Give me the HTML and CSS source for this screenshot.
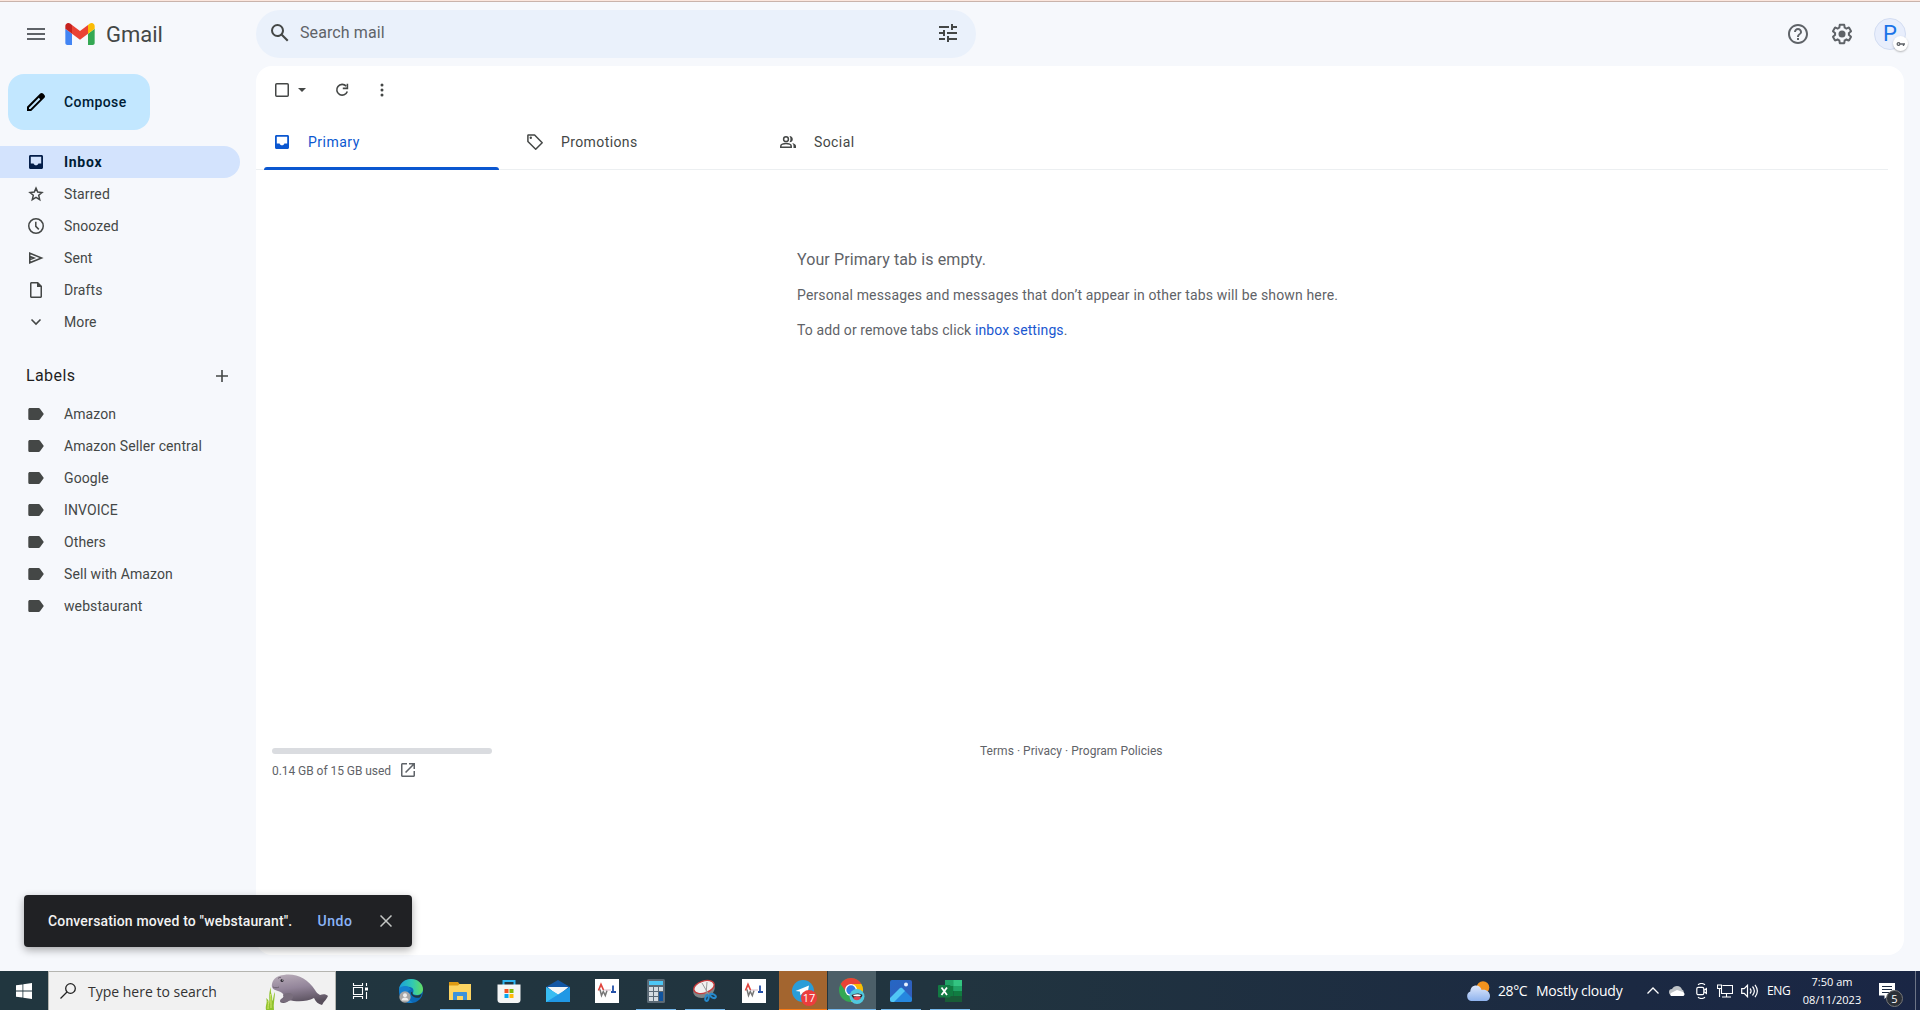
FILE: index.html
```html
<!DOCTYPE html>
<html lang="en">
<head>
<meta charset="utf-8">
<title>Inbox - Gmail</title>
<link rel="stylesheet" href="styles.css">
</head>
<body>
<svg class="defs" aria-hidden="true">
  <defs>
    <symbol id="label" viewBox="0 0 20 20"><path d="M4 4h8.600c.6 0 1.100.3 1.400.8L17.800 10 14 15.200c-.3.5-.8.8-1.400.8H4c-1 0-1.700-.7-1.700-1.600V5.600C2.300 4.700 3 4 4 4z"/></symbol>
    <symbol id="inbox" viewBox="0 0 20 20"><path fill-rule="evenodd" d="M4.500 3h11c.9 0 1.500.7 1.500 1.500v11c0 .9-.6 1.500-1.500 1.500h-11c-.9 0-1.500-.6-1.500-1.500v-11C3 3.700 3.600 3 4.500 3zM4.800 4.700v6.800h2.800c.3 1.100 1.200 1.800 2.400 1.800s2.100-.7 2.400-1.800h2.800V4.700z"/></symbol>
    <symbol id="wl" viewBox="0 0 24 24"><path fill="#fff" d="M0 0h24v24H0z"/><path fill="none" stroke="#e0443c" stroke-width="1.700" d="M3.500 11.500 6 5.500l2.500 5.500"/><path fill="none" stroke="#777" stroke-width="1.500" d="m5 10.500 1.500 6 1.800-4 2 4 1.700-5"/><path stroke="#d8b8c4" d="M9 11h7"/><path fill="none" stroke="#2450a8" stroke-width="1.800" d="M18 6.500v6.500M16 13h5"/></symbol>
  </defs>
</svg>
<div class="frame"></div>
<div class="app">
  <header class="header">
    <div class="brand">
      <svg class="menu" width="18" height="12" viewBox="0 0 18 12"><path d="M0 0h18v2H0zM0 5h18v2H0zM0 10h18v2H0z"/></svg>
      <svg class="logo" width="30" height="22" viewBox="52 42 88 66"><path fill="#4285f4" d="M58 108h14V74L52 59v43c0 3.320 2.690 6 6 6"/><path fill="#34a853" d="M120 108h14c3.320 0 6-2.690 6-6V59l-20 15"/><path fill="#fbbc04" d="M120 48v26l20-15v-8c0-7.420-8.470-11.650-14.400-7.200"/><path fill="#ea4335" d="M72 74V48l24 18 24-18v26L96 92"/><path fill="#c5221f" d="M52 51v8l20 15V48l-5.600-4.200c-5.940-4.450-14.400-.22-14.400 7.200"/></svg>
      <span class="t brand-name">Gmail</span>
    </div>
    <div class="search">
      <svg width="24" height="24" viewBox="0 0 24 24"><path d="M20.490 19l-5.730-5.730C15.530 12.200 16 10.910 16 9.500A6.500 6.500 0 1 0 9.500 16c1.410 0 2.700-.47 3.770-1.240L19 20.490 20.490 19zM5 9.500C5 7.010 7.010 5 9.500 5S14 7.010 14 9.500 11.990 14 9.500 14 5 11.990 5 9.500z"/></svg>
      <span class="t search-hint">Search mail</span>
      <svg width="24" height="24" viewBox="0 0 24 24"><path d="M3 17v2h6v-2H3zM3 5v2h10V5H3zm10 16v-2h8v-2h-8v-2h-2v6h2zM7 9v2H3v2h4v2h2V9H7zm14 4v-2H11v2h10zm-6-4h2V7h4V5h-4V3h-2v6z"/></svg>
    </div>
    <div class="account">
      <svg width="24" height="24" viewBox="0 0 24 24"><path d="M11 18h2v-2h-2v2zm1-16C6.480 2 2 6.480 2 12s4.480 10 10 10 10-4.480 10-10S17.520 2 12 2zm0 18c-4.410 0-8-3.590-8-8s3.590-8 8-8 8 3.590 8 8-3.590 8-8 8zm0-14c-2.210 0-4 1.790-4 4h2c0-1.100.9-2 2-2s2 .9 2 2c0 2-3 1.750-3 5h2c0-2.250 3-2.500 3-5 0-2.210-1.790-4-4-4z"/></svg>
      <svg width="24" height="24" viewBox="0 0 24 24"><path d="M13.850 22.250h-3.700c-.74 0-1.360-.54-1.450-1.270l-.27-1.890c-.27-.14-.53-.29-.79-.46l-1.800.72c-.7.26-1.470-.03-1.810-.65L2.200 15.530c-.35-.66-.2-1.440.36-1.880l1.530-1.190c-.01-.15-.02-.3-.02-.46 0-.15.010-.31.020-.46l-1.520-1.190c-.59-.45-.74-1.260-.37-1.880l1.850-3.190c.34-.62 1.110-.9 1.790-.63l1.810.73c.26-.17.52-.32.780-.46l.27-1.910c.09-.7.710-1.250 1.440-1.250h3.700c.74 0 1.360.54 1.450 1.270l.27 1.890c.27.14.53.29.79.46l1.800-.72c.71-.26 1.480.03 1.820.65l1.840 3.180c.36.66.2 1.440-.36 1.880l-1.520 1.190c.01.15.02.3.02.46s-.01.31-.02.46l1.520 1.190c.56.45.72 1.230.37 1.860l-1.860 3.220c-.34.62-1.110.9-1.800.63l-1.800-.72c-.26.17-.52.32-.78.46l-.27 1.910c-.1.680-.72 1.220-1.460 1.220zm-3.230-2h2.760l.37-2.550.53-.22c.44-.18.88-.44 1.340-.78l.45-.34 2.380.96 1.380-2.400-2.030-1.580.07-.56c.03-.26.06-.51.060-.78s-.03-.53-.06-.78l-.07-.56 2.030-1.580-1.390-2.400-2.390.96-.45-.35c-.42-.32-.87-.58-1.330-.77l-.52-.22-.37-2.550h-2.760l-.37 2.550-.53.210c-.44.190-.88.440-1.340.790l-.45.330-2.380-.95-1.390 2.390 2.030 1.580-.07.560a7 7 0 0 0-.06.790c0 .26.020.53.060.780l.07.560-2.030 1.580 1.380 2.400 2.390-.96.450.35c.43.330.86.580 1.330.770l.53.220.38 2.550z"/><circle cx="12" cy="12" r="3.500"/></svg>
      <div class="avatar"><span class="t">P</span>
        <span class="avatar-badge"><svg width="9" height="6" viewBox="0 0 9 6"><path fill-rule="evenodd" d="M2.500 1a2 2 0 0 1 1.900 1.300H9v1.400h-.8V5H6.800V3.700H4.400A2 2 0 1 1 2.500 1zm0 1.300a.7.7 0 1 0 0 1.400.7.7 0 0 0 0-1.400z"/></svg></span>
      </div>
    </div>
  </header>
  <div class="body">
    <aside class="sidebar">
      <button class="compose">
        <svg width="24" height="24" viewBox="0 0 24 24"><path d="M20.410 4.940l-1.350-1.350c-.78-.78-2.050-.78-2.830 0L3 16.820V21h4.180l13.230-13.230c.79-.78.79-2.050 0-2.830zM6.410 19.060L5 19v-1.360l9.820-9.820 1.410 1.410-9.820 9.830z"/></svg>
        <span class="t">Compose</span>
      </button>
      <nav class="nav">
        <div class="item active"><svg width="20" height="20"><use href="#inbox"/></svg><span class="t">Inbox</span></div>
        <div class="item"><svg width="20" height="20" viewBox="0 0 20 20"><path fill="none" stroke="#444746" stroke-width="1.500" d="m10 4.100 1.700 4 4.300.4-3.300 2.800 1 4.300L10 13.300l-3.700 2.300 1-4.300L4 8.500l4.300-.4z"/></svg><span class="t">Starred</span></div>
        <div class="item"><svg width="20" height="20" viewBox="0 0 20 20"><g fill="none" stroke="#444746" stroke-width="1.500"><circle cx="10" cy="10" r="7.250"/><path d="M9.800 5.800v4.600l3 3"/></g></svg><span class="t">Snoozed</span></div>
        <div class="item"><svg width="20" height="20" viewBox="0 0 20 20"><path fill="none" stroke="#444746" stroke-width="1.500" d="M3.750 5.200v9.600L15.600 10zM4 8.500l4 1.500-4 1.500"/></svg><span class="t">Sent</span></div>
        <div class="item"><svg width="20" height="20" viewBox="0 0 20 20"><path fill-rule="evenodd" d="M5.500 2H12l4 4v10.500c0 .8-.7 1.500-1.500 1.500h-9c-.8 0-1.500-.7-1.500-1.500v-13C4 2.700 4.700 2 5.500 2zm0 1.500v13h9V7H11V3.500z"/></svg><span class="t">Drafts</span></div>
        <div class="item"><svg width="20" height="20" viewBox="0 0 20 20"><path fill="none" stroke="#444746" stroke-width="1.600" d="m5.500 7.500 4.500 4.500 4.500-4.500"/></svg><span class="t">More</span></div>
      </nav>
      <div class="labels-head"><span class="t">Labels</span><svg width="12" height="12" viewBox="0 0 12 12"><path d="M5.200 0h1.600v5.200H12v1.600H6.800V12H5.200V6.800H0V5.200h5.200z"/></svg></div>
      <nav class="nav">
        <div class="item"><svg width="20" height="20"><use href="#label"/></svg><span class="t">Amazon</span></div>
        <div class="item"><svg width="20" height="20"><use href="#label"/></svg><span class="t">Amazon Seller central</span></div>
        <div class="item"><svg width="20" height="20"><use href="#label"/></svg><span class="t">Google</span></div>
        <div class="item"><svg width="20" height="20"><use href="#label"/></svg><span class="t">INVOICE</span></div>
        <div class="item"><svg width="20" height="20"><use href="#label"/></svg><span class="t">Others</span></div>
        <div class="item"><svg width="20" height="20"><use href="#label"/></svg><span class="t">Sell with Amazon</span></div>
        <div class="item"><svg width="20" height="20"><use href="#label"/></svg><span class="t">webstaurant</span></div>
      </nav>
    </aside>
    <main class="panel">
      <div class="toolbar">
        <svg class="check" width="14" height="14" viewBox="0 0 14 14"><rect x=".75" y=".75" width="12.500" height="12.500" rx="1" fill="none" stroke="#444746" stroke-width="1.500"/></svg>
        <svg class="caret" width="8" height="4" viewBox="0 0 8 4"><path d="M0 0h8L4 4z"/></svg>
        <svg class="refresh" width="20" height="20" viewBox="0 0 20 20"><path fill="none" stroke="#444746" stroke-width="1.600" d="M14.200 6.100A5.400 5.400 0 1 0 15.300 11.500"/><path d="M16.200 3.800v5.400h-5.400V7.600h3.800V3.800z"/></svg>
        <svg class="kebab" width="4" height="14" viewBox="0 0 4 14"><circle cx="2" cy="2" r="1.500"/><circle cx="2" cy="7" r="1.500"/><circle cx="2" cy="12" r="1.500"/></svg>
      </div>
      <div class="tabs">
        <div class="tab selected"><svg width="20" height="20"><use href="#inbox"/></svg><span class="t">Primary</span></div>
        <div class="tab"><svg width="20" height="20" viewBox="0 0 20 20"><path fill="none" stroke="#444746" stroke-width="1.500" stroke-linejoin="round" d="M2.900 3.400v6.100l7.800 7.800 6.500-6.500L9.600 2.900H3.400z"/><circle cx="5.800" cy="5.800" r="1.200"/></svg><span class="t">Promotions</span></div>
        <div class="tab"><svg width="20" height="20" viewBox="0 0 20 20"><g fill="none" stroke="#444746" stroke-width="1.500"><circle cx="8" cy="7.200" r="2.400"/><path d="M2.800 15.200v-1.300c0-1.400 2.700-2.400 5.200-2.400s5.200 1 5.200 2.400v1.300z"/></g><path d="M11.500 4.100c2 0 3.300 1.400 3.300 3.100s-1.300 3.100-3.300 3.100c1.300-1.800 1.300-4.400 0-6.200zM14.200 11c2.200.5 3.800 1.500 3.800 3v2h-2.500v-2c0-1.200-.4-2.200-1.300-3z"/></svg><span class="t">Social</span></div>
      </div>
      <div class="empty">
        <p class="empty-title">Your Primary tab is empty.</p>
        <p class="empty-text">Personal messages and messages that don’t appear in other tabs will be shown here.</p>
        <p class="empty-hint">To add or remove tabs click <a class="link">inbox settings</a>.</p>
      </div>
      <footer class="foot">
        <div class="storage">
          <div class="bar"></div>
          <div class="used"><span class="t">0.14 GB of 15 GB used</span><svg width="14" height="14" viewBox="0 0 14 14"><path d="M0 1.500C0 .7.700 0 1.500 0H6v1.500H1.500v11h11V8H14v4.500c0 .8-.7 1.500-1.500 1.500h-11C.7 14 0 13.300 0 12.500zM8 0h6v6h-1.500V2.600L5.100 10 4 8.900l7.400-7.400H8z"/></svg></div>
        </div>
        <div class="terms">Terms · Privacy · Program Policies</div>
      </footer>
    </main>
  </div>
  <div class="toast">
    <span class="t toast-text">Conversation moved to "webstaurant".</span>
    <span class="t undo">Undo</span>
    <svg width="12" height="12" viewBox="0 0 12 12"><path stroke="#c4c7c5" stroke-width="1.500" d="m.5.500 11 11M11.500.500l-11 11"/></svg>
  </div>
</div>
<div class="taskbar">
  <div class="start"><svg width="16" height="16" viewBox="0 0 16 16"><path fill="#fff" d="M0 2.300 6.500 1.400v6.100H0zM7.300 1.300 16 0v7.500H7.300zM0 8.400h6.500v6.200L0 13.700zM7.300 8.400H16V16l-8.700-1.300z"/></svg></div>
  <div class="tb-search">
    <svg width="16" height="16" viewBox="0 0 16 16"><g fill="none" stroke="#222" stroke-width="1.300"><circle cx="10.500" cy="5.500" r="4.800"/><path d="M7 9 .5 15.500"/></g></svg>
    <span class="t">Type here to search</span>
    <svg class="manatee" width="64" height="38" viewBox="0 0 64 38">
      <defs><linearGradient id="skin" x1="0" y1="0" x2=".25" y2="1"><stop offset="0" stop-color="#b9adb9"/><stop offset=".5" stop-color="#93859a"/><stop offset="1" stop-color="#584f5c"/></linearGradient></defs>
      <path fill="#8fc22d" d="M1 38c-1-5 2-7 0-12 3 2 3 4 3 6 1-5-1-10 2-17-1 7 2 8 1 14 2-2 1-6 3-9 0 6-2 12-1 18z"/><path stroke="#d5e86b" fill="none" d="M3 37c0-4 1-6 0-8M6 36c0-5 0-10-.5-14"/>
      <path fill="url(#skin)" d="M7 12C8 6 13 3.500 19 3 31 1 43 7 50 18c1 2 3 4 5 5 3-1 6-1 8 1-1 3-4 5-6 9-4-1-6-3-8-7-7 4-18 4-25 2-2 3-6 4-9 2 1-3 3-4 4-6-1-3-3-4-6-5-4-1-7-3-6-7z"/>
      <path fill="#786d7c" d="M18 23c2-2 5-2 7-2 4 1 4 5 1 7-3 2-8 3-11 1 0-2 2-3 4-3z"/><circle cx="17" cy="8.500" r="1.500" fill="#2b2730"/><circle cx="17.400" cy="8.100" r=".5" fill="#fff"/><path stroke="#6b606e" fill="none" d="M13 6.500c1-1 2-1.200 3-1M8 15c2 1 4 1 6 0"/>
    </svg>
  </div>
  <div class="slot view"><svg width="17" height="16" viewBox="0 0 17 16"><g fill="none" stroke="#fff" stroke-width="1.100"><path d="M1.500 0v2.500h9V0M1.500 16v-2.500h9V16"/><path d="M1.500 4.500h9v7h-9zM14.500 0v3M14.500 9v7"/></g><path fill="#fff" d="M13 4.500h3v3h-3z"/></svg></div>
  <div class="apps">
    <div class="slot"><svg width="24" height="24" viewBox="0 0 24 24"><defs><linearGradient id="edge" x2="1"><stop stop-color="#1a9fd9"/><stop offset=".55" stop-color="#31c8b4"/><stop offset="1" stop-color="#62dd61"/></linearGradient></defs><circle cx="12" cy="12" r="12" fill="#0c69b7"/><path fill="url(#edge)" d="M0 10C1 4 6 0 12 0c7 0 12 5 12 10 0 4-3 6-6.500 6-2 0-4-.7-3.500-2 1-2 1-5-3-6C7 6.700 2 7.500 0 10z"/><path fill="#21363f" d="M13.500 12.500c-1 3 2 4.500 5 4 2-.3 3.500-1 4.300-1.700-.5 1.500-1.200 3-2 3.800-4 1-9-1-9-5z"/><path fill="#1580cf" d="M0 10c2-4 11-4 12 1-4 0-5 5-2 9 1 2 4 3.500 4 3.500C5 26 0 19 0 10z"/><circle cx="6" cy="18" r="5.700" fill="#a8a8a8"/><circle cx="6" cy="16.200" r="2" fill="#eee"/><path fill="#eee" d="M2.500 21.500c0-4 7-4 7 0z"/></svg></div>
    <div class="slot running"><svg width="22" height="18" viewBox="0 0 22 18"><path fill="#dd9a13" d="M0 0h9l1.500 2H22v5H0z"/><path fill="#fcd462" d="M0 3.500h9l1.500-1.500H22v16H0z"/><path fill="#3b91da" d="M4 18v-7c0-.6.4-1 1-1h12c.6 0 1 .4 1 1v7h-4v-4H8v4z"/></svg></div>
    <div class="slot"><svg width="24" height="24" viewBox="0 0 24 24"><path fill="none" stroke="#2db3ef" stroke-width="2" d="M6.500 7V2h11v5"/><path fill="#f4f5f5" d="M.5 5.500h23V21c0 1.700-1.300 3-3 3h-17c-1.700 0-3-1.300-3-3z"/><path fill="#f35325" d="M7.500 10h4v4h-4z"/><path fill="#81bc06" d="M12.500 10h4v4h-4z"/><path fill="#05a6f0" d="M7.500 15h4v4h-4z"/><path fill="#ffba08" d="M12.500 15h4v4h-4z"/></svg></div>
    <div class="slot"><svg width="24" height="22" viewBox="0 0 24 22"><path fill="#1256a4" d="M0 7 12 0l12 7v4H0z"/><path fill="#f3f6f8" d="M1.500 7h21L12 16z"/><path fill="#31b5ee" d="M0 7l24 15H0z"/><path fill="#2098e5" d="M24 7 0 22h24z"/><path fill="#38bdf2" d="m0 7 12 7.500L0 22z"/></svg></div>
    <div class="slot"><svg width="24" height="24"><use href="#wl"/></svg></div>
    <div class="slot running"><svg width="18" height="24" viewBox="0 0 18 24"><rect width="18" height="24" rx="1.500" fill="#5b6a76"/><path fill="#4dc6f4" d="M2 2h14v4H2z"/><path fill="#d5dce1" d="M2 8h4v4H2zM7 8h4v4H7zM12 8h4v4h-4zM2 13h4v4H2zM7 13h4v4H7zM2 18h4v4H2zM7 18h4v4H7z"/><path fill="#11549e" d="M12 13h4v9h-4z"/></svg></div>
    <div class="slot running"><svg width="24" height="24" viewBox="0 0 24 24"><ellipse cx="11" cy="11" rx="11" ry="7.500" transform="rotate(-18 11 11)" fill="#7e8588"/><ellipse cx="11" cy="8" rx="10.500" ry="6" transform="rotate(-18 11 8)" fill="#f1f1f1" stroke="#c83c3e" stroke-width="1.400"/><path stroke="#999" stroke-width="1" d="m9 4 7 12M14 3l-1 12"/><g fill="none" stroke="#2689cc" stroke-width="2"><ellipse cx="14" cy="19" rx="1.600" ry="3" transform="rotate(15 14 19)"/><ellipse cx="20" cy="17" rx="3" ry="1.700" transform="rotate(25 20 17)"/></g></svg></div>
    <div class="slot"><svg width="24" height="24"><use href="#wl"/></svg></div>
    <div class="slot alert"><svg width="24" height="24" viewBox="0 0 24 24"><circle cx="12" cy="12" r="11" fill="#2a9dd8"/><path fill="#fff" d="M4.500 12 18 6.500 16 17l-4.500-3L9.500 16.500l-.7-4z"/></svg><span class="count">17</span></div>
    <div class="slot current"><svg width="26" height="26" viewBox="0 0 26 26"><circle cx="12" cy="12" r="12" fill="#34a853"/><path fill="#ea4335" d="M1.600 6A12 12 0 0 1 22.400 6L12 9 8 15z"/><path fill="#fbbc04" d="M22.400 6A12 12 0 0 1 12 24l5-9-3-9z"/><circle cx="12" cy="12" r="6" fill="#fff"/><circle cx="12" cy="12" r="4.700" fill="#3579e5"/><circle cx="18" cy="18.500" r="7.500" fill="#50c8de"/><path fill="#302530" d="M12.500 17c4-2 8-2 11 0-1 5-9 7-11 0z"/><path fill="#e84250" d="M14 20c3-2 6-2 8-.5-1 3-6 4-8 .5z"/><path fill="#fff" d="M14 17c3-1 6-1 8 0l-1 1.200h-6z"/></svg></div>
    <div class="slot running"><svg width="22" height="22" viewBox="0 0 22 22"><defs><linearGradient id="photo" x2="1" y2="1"><stop stop-color="#2567c4"/><stop offset="1" stop-color="#345cba"/></linearGradient><clipPath id="round"><rect width="22" height="22" rx="2"/></clipPath></defs><g clip-path="url(#round)"><path fill="url(#photo)" d="M0 0h22v22H0z"/><path fill="#2587df" d="m11 7 11 11v4H4z"/><path fill="#50c6f5" d="M0 18 9.500 8.500c1-1 2-1 3 0L15 11 4 22H0z"/></g><circle cx="16" cy="4.500" r="2" fill="#e8f1ff"/></svg></div>
    <div class="slot running"><svg width="24" height="22" viewBox="0 0 24 22"><path fill="#21a366" d="M7 0h9v11H7z"/><path fill="#33c481" d="M15.500 0H24v6h-8.500z"/><path fill="#107c41" d="M7 6h8.500v10H7z"/><path fill="#21a366" d="M15.500 6H24v5h-8.500z"/><path fill="#107c41" d="M15.500 11H24v5h-8.500z"/><path fill="#185c37" d="M7 16h17v6H7z"/><rect y="5" width="12.500" height="12.500" rx="1" fill="#127a43"/><path fill="none" stroke="#fff" stroke-width="1.800" d="m3.500 7.500 5.500 7.500M9 7.500 3.500 15"/></svg></div>
  </div>
  <div class="tray">
    <svg class="weather" width="24" height="20" viewBox="0 0 24 20"><defs><linearGradient id="cloud" x2="0" y2="1"><stop stop-color="#dfe8fb"/><stop offset="1" stop-color="#8fb3ee"/></linearGradient></defs><circle cx="17" cy="6.500" r="6.300" fill="#f2931e"/><path fill="url(#cloud)" d="M5 20a5 5 0 0 1-.7-9.500C4.500 6.500 7 4.500 10 4.500c3 0 5 2 5.600 4.500 4-1 8.400 1.500 8.400 6 0 3-2 5-4.500 5z"/></svg>
    <span class="t temp">28°C</span><span class="t sky">Mostly cloudy</span>
    <svg class="up" width="12" height="7" viewBox="0 0 12 7"><path fill="none" stroke="#fff" stroke-width="1.300" d="m.5 6.500 5.500-5.500 5.500 5.500"/></svg>
    <svg class="onedrive" width="16" height="10" viewBox="0 0 16 10"><path fill="#bfc3c7" d="M3 9a3 3 0 0 1 0-6c1-2 3-3 5-3 3 0 4 1.500 5 3.500A3 3 0 0 1 13 9z"/><path fill="#fff" d="M2 10c-1-1-1-2 0-3l6-3 6 2c2 1 2 3 .5 4z"/></svg>
    <svg class="meet" width="11" height="16" viewBox="0 0 11 16"><g fill="none" stroke="#fff" stroke-width="1.200"><rect x=".8" y="4.300" width="7" height="7.400" rx="1.500"/><path d="m8 7.200 2.400-1.500v4.600L8 8.800M2 1.800C4 .3 7 .3 9 1.800M2 14.200c2 1.500 5 1.500 7 0"/></g></svg>
    <svg class="net" width="16" height="14" viewBox="0 0 16 14"><path fill="none" stroke="#fff" stroke-width="1.100" d="M5.500 1.500h10v8h-11V5M.5 1h4v3.500h-4zM2.500 4.500V13M9.500 9.500v3M5 13h9"/></svg>
    <svg class="vol" width="17" height="14" viewBox="0 0 17 14"><path fill="none" stroke="#fff" stroke-width="1.200" d="M.7 4.700h2.500L6.500 1.300v11.400L3.200 9.300H.7zM9 4.500c1.300 1.500 1.300 3.500 0 5M11.500 2.500c2.500 3 2.500 6 0 9M14 .8c3 4 3 8.500 0 12.400"/></svg>
    <span class="t lang">ENG</span>
    <div class="clock"><span class="t">7:50 am</span><span class="t">08/11/2023</span></div>
    <div class="notice"><svg width="16" height="16" viewBox="0 0 16 16"><path fill="#fff" d="M0 0h16v12.500H9L5.500 16v-3.500H0z"/><path stroke="#1b2a42" d="M3 3.500h10M3 6.500h10M3 9.500h7"/></svg><span class="notice-badge">5</span></div>
    <span class="peek"></span>
  </div>
</div>
</body>
</html>
```
FILE: styles.css
```css
* { box-sizing: border-box; }
body {
  margin: 0;
  width: 1920px;
  height: 1010px;
  overflow: hidden;
  display: flex;
  flex-direction: column;
  background: #f6f8fc;
  color: #444746;
  fill: #444746;
  font: 14px/20px Roboto, "Liberation Sans", sans-serif;
}
svg { display: block; flex: none; }
p { margin: 0; }
.t { white-space: nowrap; }
.defs { position: absolute; width: 0; height: 0; }
.frame { height: 2px; flex: none; background: #fbe6dd; border-bottom: 1px solid #c9b3ab; }
.app { flex: 1; min-height: 0; display: flex; flex-direction: column; position: relative; }

.header { height: 64px; flex: none; display: flex; align-items: flex-start; padding-top: 8px; }
.brand { width: 256px; height: 48px; display: flex; align-items: center; padding-left: 27px; }
.menu { fill: #5f6368; }
.logo { margin: 0 11px 0 20px; }
.brand-name { padding-top: 2px; font-size: 22px; line-height: 26px; color: #444746; }
.search { width: 720px; height: 48px; border-radius: 24px; background: #eaf1fb; display: flex; align-items: center; padding: 0 16px 2px 12px; }
.search-hint { flex: 1; margin-left: 8px; font-size: 16px; letter-spacing: .1px; color: #5f6368; }
.account { margin-left: auto; height: 48px; display: flex; align-items: center; padding-right: 14px; fill: #5f6368; gap: 20px; }
.avatar { position: relative; width: 32px; height: 32px; border-radius: 50%; background: #e8eefc; border: 1px solid #d3ddf2; color: #1a73e8; font-size: 22px; display: flex; align-items: center; justify-content: center; }
.avatar-badge { position: absolute; left: 18px; top: 17px; width: 15px; height: 15px; border-radius: 50%; background: #fff; box-shadow: 0 1px 2px #0004; display: flex; align-items: center; justify-content: center; }

.body { flex: 1; min-height: 0; display: flex; padding: 0 16px 16px 0; }
.sidebar { width: 256px; padding-top: 8px; }
.compose { width: 142px; height: 56px; margin-left: 8px; padding: 0 0 0 16px; border: 0; border-radius: 16px; background: #c2e7ff; display: flex; align-items: center; gap: 16px; font: 500 14px/20px Roboto, sans-serif; letter-spacing: .4px; color: #001d35; fill: #000; }
.nav { display: flex; flex-direction: column; }
.compose + .nav { margin-top: 16px; }
.item { width: 240px; height: 32px; padding-left: 26px; display: flex; align-items: center; gap: 18px; letter-spacing: .1px; }
.item.active { background: #d3e3fd; border-radius: 0 16px 16px 0; color: #001d35; fill: #041e49; font-weight: 700; letter-spacing: .7px; }
.labels-head { height: 60px; padding: 16px 28px 0 26px; display: flex; align-items: center; justify-content: space-between; font-size: 16px; letter-spacing: .4px; color: #1f1f1f; }

.panel { flex: 1; border-radius: 16px; background: #fff; display: flex; flex-direction: column; }
.toolbar { height: 48px; display: flex; align-items: center; padding-left: 19px; }
.caret { margin-left: 9px; }
.refresh { margin-left: 26px; }
.kebab { margin-left: 28px; }
.tabs { height: 56px; margin-right: 16px; display: flex; border-bottom: 1px solid #eceff1; }
.tab { position: relative; width: 253px; display: flex; align-items: center; gap: 16px; padding-left: 16px; letter-spacing: .4px; }
.tab.selected { color: #0b57d0; fill: #0b57d0; letter-spacing: .5px; }
.tab.selected::after { content: ""; position: absolute; left: 8px; bottom: -1px; width: 235px; height: 3px; background: #0b57d0; border-radius: 3px 3px 0 0; }
.empty { margin: 78px 0 0 541px; color: #5f6368; white-space: nowrap; }
.empty-title { font-size: 16px; line-height: 24px; letter-spacing: .1px; }
.empty-text { margin-top: 13px; letter-spacing: .15px; }
.empty-hint { margin-top: 15px; letter-spacing: .11px; }
.link { color: #1a57d0; }
.foot { margin-top: 408px; display: flex; color: #5f6368; font-size: 12px; fill: #5f6368; }
.storage { width: 724px; padding-left: 16px; }
.bar { width: 220px; height: 6px; border-radius: 3px; background: #dadce0; }
.used { margin-top: 7px; display: flex; align-items: center; gap: 10px; letter-spacing: -.05px; }
.used svg { margin-top: -2px; }
.terms { margin-top: -7px; letter-spacing: .03px; }

.toast { position: absolute; left: 24px; top: 893px; width: 388px; height: 52px; border-radius: 4px; background: #202124; color: #f2f2f2; display: flex; align-items: center; padding: 0 20px 0 24px; box-shadow: 0 3px 8px #0005; font-weight: 500; letter-spacing: .16px; }
.undo { margin-left: 25px; color: #8ab4f8; letter-spacing: .6px; }
.toast svg { margin-left: auto; }

.taskbar { height: 39px; flex: none; display: flex; background: linear-gradient(90deg, #21363f, #21343f 50%, #1b2942 85%, #1a2645); color: #fff; font-family: "Open Sans", "Noto Sans", sans-serif; }
.start { width: 48px; display: flex; align-items: center; justify-content: center; }
.tb-search { width: 288px; background: #f1f1f1; border: 1px solid #b5b5b0; border-bottom: 0; display: flex; align-items: center; padding-left: 11px; color: #333; }
.tb-search .t { margin-left: 12px; padding-top: 1px; }
.manatee { margin-left: auto; margin-right: 6px; }
.apps { display: flex; gap: 1px; margin-left: 3px; }
.slot { position: relative; width: 48px; display: flex; align-items: center; justify-content: center; }
.running::after, .alert::after, .current::after { content: ""; position: absolute; bottom: 0; left: 4px; right: 4px; height: 1px; background: #76b9ed; }
.alert { background: #a3652f; }
.alert::after { background: #f97b16; left: 0; right: 0; }
.current { background: #4c5f68; }
.current::after { left: 0; right: 0; }
.count { position: absolute; left: 22px; top: 19px; width: 16px; height: 16px; border-radius: 50%; background: #ec3d3d; font-size: 11px; line-height: 16px; text-align: center; }
.tray { margin-left: auto; display: flex; align-items: center; width: 454px; fill: #fff; }
.temp { margin-left: 8px; width: 29px; letter-spacing: -.4px; }
.sky { margin-left: 9px; width: 87px; letter-spacing: -.25px; }
.up { margin-left: 24px; }
.onedrive { margin-left: 10px; }
.meet { margin-left: 11px; }
.net { margin-left: 10px; }
.vol { margin-left: 8px; }
.lang { margin-left: 9px; width: 23px; font-size: 12px; letter-spacing: -.4px; }
.clock { margin-left: 13px; width: 58px; display: flex; flex-direction: column; align-items: center; font-size: 11px; line-height: 18px; }
.notice { position: relative; margin-left: 18px; }
.notice-badge { position: absolute; left: 7px; top: 7px; width: 17px; height: 17px; border-radius: 50%; border: 1px solid #777; background: #2b3038; font-size: 11px; line-height: 15px; text-align: center; }
.peek { margin-left: auto; margin-right: 4px; align-self: stretch; width: 1px; background: #6c7486; }
```
